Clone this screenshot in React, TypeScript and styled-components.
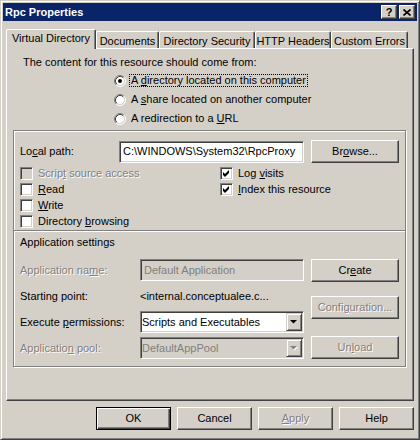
import * as React from "react";
import styled, { createGlobalStyle, css } from "styled-components";

const face = "#d4d0c8";
const shadow = "#808080";
const dark = "#404040";
const light = "#ffffff";

const GlobalStyle = createGlobalStyle`
  html, body {
    margin: 0;
    padding: 0;
    background: ${face};
  }
  body {
    font-family: "Liberation Sans", Arial, sans-serif;
    font-size: 11px;
    line-height: 13px;
    color: #000;
  }
`;

const raised = css`
  border: 1px solid;
  border-color: ${light} ${dark} ${dark} ${light};
  box-shadow: inset -1px -1px 0 ${shadow};
`;

const sunken = css`
  border: 1px solid;
  border-color: ${shadow} ${light} ${light} ${shadow};
  box-shadow: inset 1px 1px 0 ${dark}, inset -1px -1px 0 ${face};
`;

const Window = styled.div`
  box-sizing: border-box;
  width: 420px;
  height: 440px;
  background: ${face};
  border: 1px solid;
  border-color: ${face} ${dark} ${dark} ${face};
  box-shadow: inset 1px 1px 0 ${light}, inset -1px -1px 0 ${shadow};
  padding: 2px;
  display: flex;
  flex-direction: column;
`;

const TitleBar = styled.div`
  height: 18px;
  flex: none;
  background: #0a246a;
  color: #fff;
  font-weight: bold;
  display: flex;
  align-items: center;
  padding: 0 2px;
`;

const Title = styled.span`
  flex: 1;
`;

const CaptionButton = styled.div<{ $ml?: number }>`
  box-sizing: border-box;
  width: 16px;
  height: 14px;
  margin-left: ${(p) => p.$ml ?? 0}px;
  background: ${face};
  ${raised}
  color: #000;
  font-size: 11px;
  font-weight: bold;
  line-height: 11px;
  display: flex;
  align-items: center;
  justify-content: center;
`;

const Body = styled.div`
  flex: 1;
  display: flex;
  flex-direction: column;
  padding: 8px 3px 0;
`;

const TabStrip = styled.div`
  height: 19px;
  display: flex;
  align-items: flex-end;
`;

const Tab = styled.div<{ $active?: boolean; $w: number }>`
  box-sizing: border-box;
  width: ${(p) => p.$w}px;
  height: ${(p) => (p.$active ? 20 : 17)}px;
  margin-bottom: ${(p) => (p.$active ? -1 : 0)}px;
  padding: ${(p) => (p.$active ? "0 0 2px" : "2px 0 0")};
  position: relative;
  z-index: ${(p) => (p.$active ? 1 : 0)};
  background: ${face};
  border-top: 1px solid ${light};
  border-left: 1px solid ${light};
  border-right: 1px solid ${dark};
  border-radius: 2px 2px 0 0;
  box-shadow: inset -1px 0 0 ${shadow};
  display: flex;
  align-items: center;
  justify-content: center;
  white-space: nowrap;
`;

const Panel = styled.div`
  box-sizing: border-box;
  height: 353px;
  flex: none;
  ${raised}
  padding: 7px 6px 0;
`;

const Heading = styled.div`
  margin-left: 10px;
`;

const RadioList = styled.div`
  margin: 2px 0 0 101px;
`;

const RadioRow = styled.div`
  height: 19px;
  display: flex;
  align-items: center;
  gap: 3px;
`;

const RadioLabel = styled.span<{ $focus?: boolean }>`
  display: inline-block;
  line-height: 11px;
  padding: 0 1px;
  border: 1px dotted ${(p) => (p.$focus ? "#000" : "transparent")};
`;

const GroupBox = styled.div`
  border: 1px solid ${shadow};
  box-shadow: inset 1px 1px 0 ${light}, 1px 1px 0 ${light};
  padding: 9px 7px 7px 6px;
  margin: 2px 1px 0 0;
`;

const PathRow = styled.div`
  display: grid;
  grid-template-columns: 99px 185px 95px;
  align-items: center;
`;

const Field = styled.div<{ $w: number; $disabled?: boolean }>`
  box-sizing: border-box;
  width: ${(p) => p.$w}px;
  height: 22px;
  ${sunken}
  background: ${(p) => (p.$disabled ? face : light)};
  color: ${(p) => (p.$disabled ? shadow : "#000")};
  padding: 0 3px;
  display: flex;
  align-items: center;
  white-space: nowrap;
  overflow: hidden;
`;

const SelectBox = styled(Field)`
  padding: 0 2px 0 1px;
  justify-content: space-between;
`;

const DropButton = styled.div`
  box-sizing: border-box;
  width: 16px;
  height: 18px;
  flex: none;
  background: ${face};
  border: 1px solid;
  border-color: ${face} ${dark} ${dark} ${face};
  box-shadow: inset 1px 1px 0 ${light}, inset -1px -1px 0 ${shadow};
  display: flex;
  align-items: center;
  justify-content: center;
  margin-right: -1px;
`;

const Button = styled.button<{ $w?: number; $mt?: number; $default?: boolean; $end?: boolean }>`
  box-sizing: border-box;
  width: ${(p) => p.$w ?? 88}px;
  height: 23px;
  margin: ${(p) => p.$mt ?? 0}px 0 0;
  padding: 0;
  justify-self: ${(p) => (p.$end ? "end" : "auto")};
  background: ${face};
  font: inherit;
  color: #000;
  border: 1px solid;
  ${(p) =>
    p.$default
      ? css`
          border-color: #000;
          box-shadow: inset 1px 1px 0 ${light}, inset -1px -1px 0 ${dark}, inset -2px -2px 0 ${shadow};
        `
      : css`
          border-color: ${light} ${dark} ${dark} ${light};
          box-shadow: inset -1px -1px 0 ${shadow};
        `}
  &:disabled {
    color: ${shadow};
    text-shadow: 1px 1px 0 ${light};
  }
`;

const CheckGrid = styled.div`
  display: grid;
  grid-template-columns: 200px 1fr;
  grid-template-rows: repeat(4, 16px);
  grid-auto-flow: column;
  margin-top: 3px;
`;

const CheckItem = styled.div<{ $disabled?: boolean }>`
  display: flex;
  align-items: flex-start;
  gap: 5px;
  padding-top: 1px;
  color: ${(p) => (p.$disabled ? shadow : "#000")};
  text-shadow: ${(p) => (p.$disabled ? `1px 1px 0 ${light}` : "none")};
`;

const Box = styled.span<{ $disabled?: boolean }>`
  box-sizing: border-box;
  width: 13px;
  height: 13px;
  flex: none;
  ${sunken}
  background: ${(p) => (p.$disabled ? face : light)};
  display: flex;
  align-items: center;
  justify-content: center;
`;

const Separator = styled.div`
  height: 0;
  border-top: 1px solid ${shadow};
  border-bottom: 1px solid ${light};
  margin: 0 -7px 0 -6px;
`;

const SubHeading = styled.div`
  margin-top: 4px;
`;

const AppSection = styled.div`
  display: flex;
  gap: 7px;
  margin-top: 10px;
`;

const AppFields = styled.div`
  width: 284px;
  display: flex;
  flex-direction: column;
`;

const AppButtons = styled.div`
  display: flex;
  flex-direction: column;
`;

const FieldRow = styled.div<{ $h?: number; $mt?: number }>`
  display: flex;
  align-items: center;
  height: ${(p) => p.$h ?? 22}px;
  margin-top: ${(p) => p.$mt ?? 0}px;
  white-space: nowrap;
`;

const RowLabel = styled.span<{ $disabled?: boolean }>`
  width: 120px;
  flex: none;
  color: ${(p) => (p.$disabled ? shadow : "#000")};
  text-shadow: ${(p) => (p.$disabled ? `1px 1px 0 ${light}` : "none")};
`;

const Footer = styled.div`
  display: flex;
  justify-content: flex-end;
  gap: 6px;
  margin-top: 6px;
`;

const Key = styled.span`
  text-decoration: underline;
`;

const Radio = ({ checked }: { checked?: boolean }) => (
  <svg width="12" height="12" viewBox="0 0 12 12" style={{ flex: "none" }}>
    <circle cx="6" cy="6" r="4.5" fill={light} />
    <path d="M2.11 9.89 A5.5 5.5 0 0 1 9.89 2.11" fill="none" stroke={shadow} />
    <path d="M9.89 2.11 A5.5 5.5 0 0 1 2.11 9.89" fill="none" stroke={light} />
    <path d="M2.82 9.18 A4.5 4.5 0 0 1 9.18 2.82" fill="none" stroke={dark} />
    <path d="M9.18 2.82 A4.5 4.5 0 0 1 2.82 9.18" fill="none" stroke={face} />
    {checked && <circle cx="6" cy="6" r="2" fill="#000" />}
  </svg>
);

const Check = () => (
  <svg width="9" height="9" viewBox="0 0 9 9">
    <path d="M1 3 L3 5 L7 1 V4 L3 8 L1 6 Z" fill="#000" />
  </svg>
);

const Arrow = ({ disabled }: { disabled?: boolean }) => (
  <svg width="8" height="5" viewBox="0 0 8 5">
    {disabled && <path d="M1 1 H8 L4.5 4.5 Z" fill={light} />}
    <path d="M0 0 H7 L3.5 3.5 Z" fill={disabled ? shadow : "#000"} />
  </svg>
);

const CloseGlyph = () => (
  <svg width="8" height="7" viewBox="0 0 8 7">
    <path d="M0.5 0.5 L7.5 6.5 M7.5 0.5 L0.5 6.5" stroke="#000" strokeWidth="1.6" />
  </svg>
);

const tabs = [
  { label: "Virtual Directory", w: 90, active: true },
  { label: "Documents", w: 63 },
  { label: "Directory Security", w: 96 },
  { label: "HTTP Headers", w: 76 },
  { label: "Custom Errors", w: 77 },
];

export default function App() {
  return (
    <>
      <GlobalStyle />
      <Window>
        <TitleBar>
          <Title>Rpc Properties</Title>
          <CaptionButton>?</CaptionButton>
          <CaptionButton $ml={2}>
            <CloseGlyph />
          </CaptionButton>
        </TitleBar>
        <Body>
          <TabStrip>
            {tabs.map((t) => (
              <Tab key={t.label} $w={t.w} $active={t.active}>
                {t.label}
              </Tab>
            ))}
          </TabStrip>
          <Panel>
            <Heading>The content for this resource should come from:</Heading>
            <RadioList>
              <RadioRow>
                <Radio checked />
                <RadioLabel $focus>
                  A <Key>d</Key>irectory located on this computer
                </RadioLabel>
              </RadioRow>
              <RadioRow>
                <Radio />
                <RadioLabel>
                  A <Key>s</Key>hare located on another computer
                </RadioLabel>
              </RadioRow>
              <RadioRow>
                <Radio />
                <RadioLabel>
                  A redirection to a <Key>U</Key>RL
                </RadioLabel>
              </RadioRow>
            </RadioList>
            <GroupBox>
              <PathRow>
                <span>
                  Lo<Key>c</Key>al path:
                </span>
                <Field $w={185}>C:\WINDOWS\System32\RpcProxy</Field>
                <Button $end>
                  Br<Key>o</Key>wse...
                </Button>
              </PathRow>
              <CheckGrid>
                <CheckItem $disabled>
                  <Box $disabled />
                  <span>
                    Scrip<Key>t</Key> source access
                  </span>
                </CheckItem>
                <CheckItem>
                  <Box />
                  <span>
                    <Key>R</Key>ead
                  </span>
                </CheckItem>
                <CheckItem>
                  <Box />
                  <span>
                    <Key>W</Key>rite
                  </span>
                </CheckItem>
                <CheckItem>
                  <Box />
                  <span>
                    Directory <Key>b</Key>rowsing
                  </span>
                </CheckItem>
                <CheckItem>
                  <Box>
                    <Check />
                  </Box>
                  <span>
                    Log <Key>v</Key>isits
                  </span>
                </CheckItem>
                <CheckItem>
                  <Box>
                    <Check />
                  </Box>
                  <span>
                    <Key>I</Key>ndex this resource
                  </span>
                </CheckItem>
              </CheckGrid>
              <Separator />
              <SubHeading>Application settings</SubHeading>
              <AppSection>
                <AppFields>
                  <FieldRow>
                    <RowLabel $disabled>
                      Application na<Key>m</Key>e:
                    </RowLabel>
                    <Field $w={164} $disabled>
                      Default Application
                    </Field>
                  </FieldRow>
                  <FieldRow $h={30}>
                    <RowLabel>Starting point:</RowLabel>
                    <span>&lt;internal.conceptualee.c...</span>
                  </FieldRow>
                  <FieldRow>
                    <RowLabel>
                      Execute <Key>p</Key>ermissions:
                    </RowLabel>
                    <SelectBox $w={164}>
                      <span>Scripts and Executables</span>
                      <DropButton>
                        <Arrow />
                      </DropButton>
                    </SelectBox>
                  </FieldRow>
                  <FieldRow $mt={4}>
                    <RowLabel $disabled>
                      Applicatio<Key>n</Key> pool:
                    </RowLabel>
                    <SelectBox $w={164} $disabled>
                      <span>DefaultAppPool</span>
                      <DropButton>
                        <Arrow disabled />
                      </DropButton>
                    </SelectBox>
                  </FieldRow>
                </AppFields>
                <AppButtons>
                  <Button>
                    Cr<Key>e</Key>ate
                  </Button>
                  <Button $mt={14} disabled>
                    Confi<Key>g</Key>uration...
                  </Button>
                  <Button $mt={17} disabled>
                    Un<Key>l</Key>oad
                  </Button>
                </AppButtons>
              </AppSection>
            </GroupBox>
          </Panel>
          <Footer>
            <Button $w={75} $default>
              OK
            </Button>
            <Button $w={75}>Cancel</Button>
            <Button $w={75} disabled>
              <Key>A</Key>pply
            </Button>
            <Button $w={75}>Help</Button>
          </Footer>
        </Body>
      </Window>
    </>
  );
}
